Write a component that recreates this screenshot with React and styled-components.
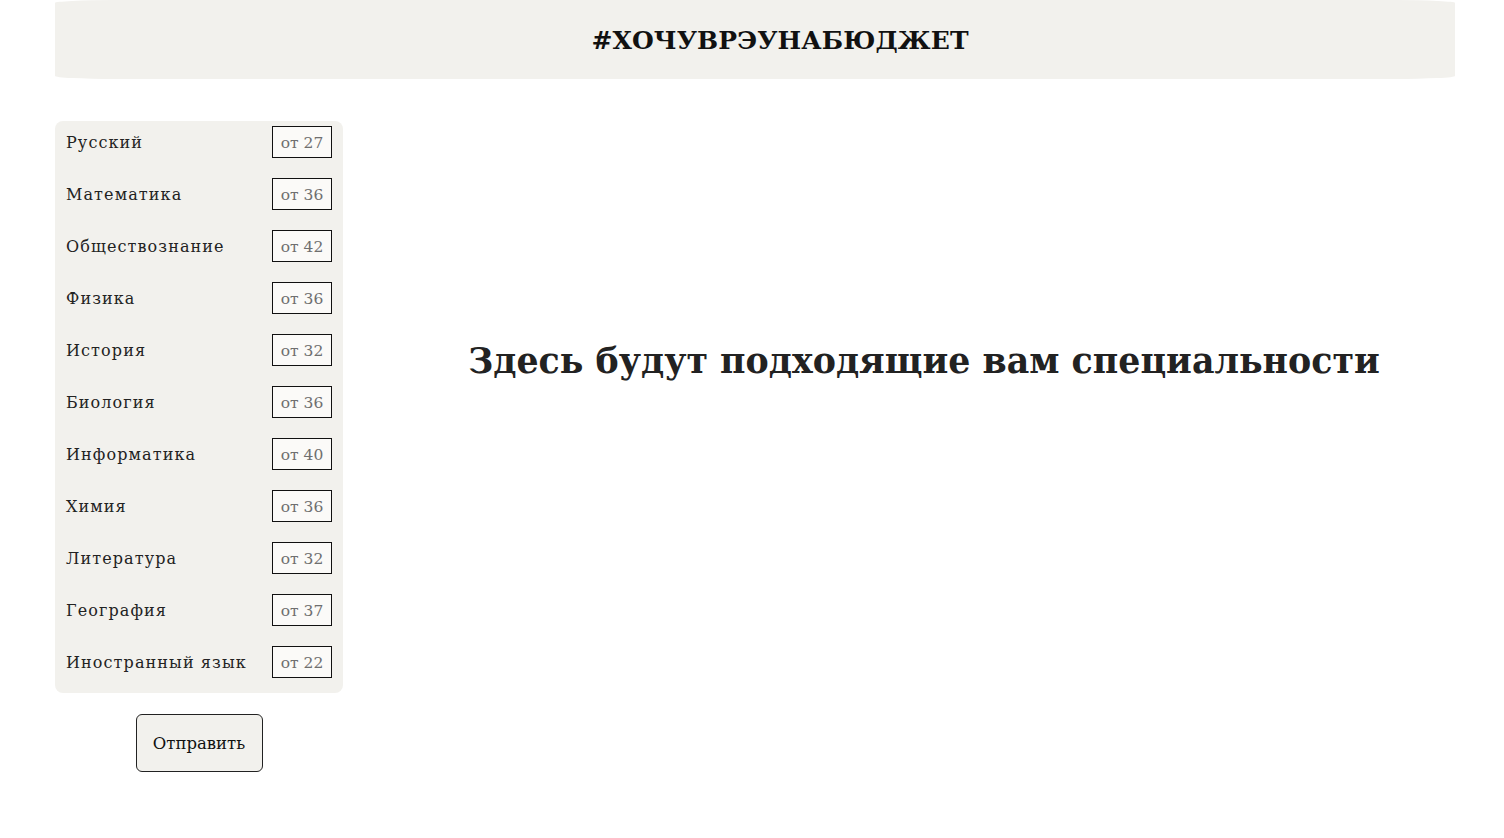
import styled, { createGlobalStyle } from "styled-components"

const GlobalStyle = createGlobalStyle`
body {
    margin: 0;
    background: #ffffff;
    font-family: "DejaVu Serif", "Liberation Serif", serif;
    color: #222222;
}
`;

const subjects = [
    { name: "Русский", min: 27 },
    { name: "Математика", min: 36 },
    { name: "Обществознание", min: 42 },
    { name: "Физика", min: 36 },
    { name: "История", min: 32 },
    { name: "Биология", min: 36 },
    { name: "Информатика", min: 40 },
    { name: "Химия", min: 36 },
    { name: "Литература", min: 32 },
    { name: "География", min: 37 },
    { name: "Иностранный язык", min: 22 },
];

const Page = styled.div`
    margin: 0 49px 0 55px;
`;

const Header = styled.header`
    height: 79px;
    background: #f2f1ed;
    border-radius: 60px / 3px;
    display: flex;
    align-items: center;
    justify-content: center;
    padding-left: 50px;
    padding-top: 2px;
    box-sizing: border-box;
`;

const Title = styled.h1`
    margin: 0;
    font-size: 25px;
    font-weight: 700;
    color: #111111;
    letter-spacing: 0.1px;
`;

const Content = styled.main`
    display: grid;
    grid-template-columns: 288px 1fr;
    margin-top: 42px;
`;

const Sidebar = styled.div`
    display: flex;
    flex-direction: column;
    align-items: center;
`;

const Panel = styled.ul`
    list-style: none;
    margin: 0;
    width: 100%;
    box-sizing: border-box;
    padding: 5px 11px 15px 11px;
    background: #f2f1ed;
    border-radius: 8px;
    display: flex;
    flex-direction: column;
    gap: 20px;
`;

const Row = styled.li`
    display: flex;
    align-items: center;
    justify-content: space-between;
    height: 32px;
`;

const Label = styled.span`
    font-size: 16px;
    letter-spacing: 1.1px;
    color: #222222;
    padding-top: 1px;
`;

const Badge = styled.span`
    width: 60px;
    height: 32px;
    box-sizing: border-box;
    border: 1px solid #111111;
    background: #fbfaf8;
    color: #6f6f6f;
    font-size: 15.5px;
    padding-top: 2px;
    display: flex;
    align-items: center;
    justify-content: center;
`;

const SubmitButton = styled.button`
    margin-top: 21px;
    width: 127px;
    height: 58px;
    border: 1px solid #222222;
    border-radius: 6px;
    background: #f2f1ed;
    font-family: inherit;
    font-size: 16.5px;
    color: #111111;
    cursor: pointer;
`;

const Results = styled.section`
    display: flex;
    justify-content: center;
    padding-top: 219px;
    padding-left: 50px;
`;

const Placeholder = styled.h2`
    margin: 0;
    font-size: 34.8px;
    font-weight: 700;
    color: #222222;
`;

export default function App() {
    return <Page>
        <GlobalStyle />
        <Header>
            <Title>#ХОЧУВРЭУНАБЮДЖЕТ</Title>
        </Header>
        <Content>
            <Sidebar>
                <Panel>
                    {subjects.map(s => (
                        <Row key={s.name}>
                            <Label>{s.name}</Label>
                            <Badge>от {s.min}</Badge>
                        </Row>
                    ))}
                </Panel>
                <SubmitButton>Отправить</SubmitButton>
            </Sidebar>
            <Results>
                <Placeholder>Здесь будут подходящие вам специальности</Placeholder>
            </Results>
        </Content>
    </Page>
}
